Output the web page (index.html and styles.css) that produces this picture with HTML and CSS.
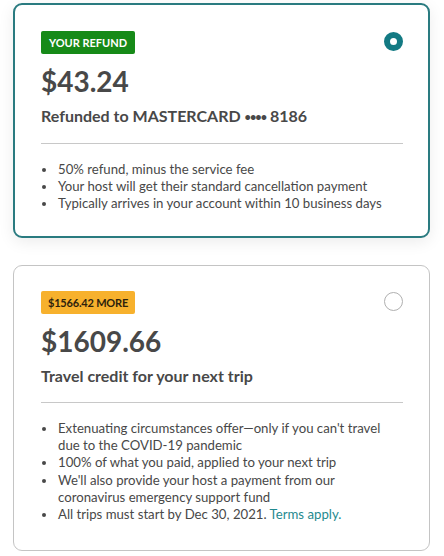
FILE: index.html
```html
<!DOCTYPE html>
<html lang="en">
<head>
    <meta charset="UTF-8">
    <meta name="viewport" content="width=device-width, initial-scale=1.0">
    <title>Refund options</title>
    <link rel="stylesheet" href="styles.css">
</head>
<body>

<div class="options">
    <div class="option selected">
        <div class="option-head">
            <span class="badge badge-green">YOUR REFUND</span>
            <span class="radio"></span>
        </div>
        <div class="amount">$43.24</div>
        <div class="subtitle">Refunded to MASTERCARD <span class="dots">&bull;&bull;&bull;&bull;</span> 8186</div>
        <hr class="divider">
        <ul class="points">
            <li>50% refund, minus the service fee</li>
            <li>Your host will get their standard cancellation payment</li>
            <li>Typically arrives in your account within 10 business days</li>
        </ul>
    </div>

    <div class="option">
        <div class="option-head">
            <span class="badge badge-orange">$1566.42 MORE</span>
            <span class="radio"></span>
        </div>
        <div class="amount">$1609.66</div>
        <div class="subtitle">Travel credit for your next trip</div>
        <hr class="divider">
        <ul class="points">
            <li>Extenuating circumstances offer&mdash;only if you can't travel due to the COVID-19 pandemic</li>
            <li>100% of what you paid, applied to your next trip</li>
            <li>We'll also provide your host a payment from our coronavirus emergency support fund</li>
            <li>All trips must start by Dec 30, 2021. <a href="#" class="link">Terms apply.</a></li>
        </ul>
    </div>
</div>

</body>
</html>
```

FILE: styles.css
```css
body {
    margin: 0;
    background: #fff;
    font-family: Lato, "Noto Sans", Arial, sans-serif;
    color: #484848;
}

.options {
    padding: 3px 14px 0 13px;
    display: flex;
    flex-direction: column;
    gap: 27px;
}

.option {
    border: 1px solid #c4c4c4;
    border-radius: 9px;
    padding: 25px 26px 27px 27px;
    background: #fff;
}

.option.selected {
    border: 2px solid #2a7b80;
    padding: 26px 25px 25px 26px;
    box-shadow: 0 4px 16px rgba(0, 0, 0, 0.08);
    height: 235px;
    box-sizing: border-box;
}

.option-head {
    display: flex;
    justify-content: space-between;
    align-items: flex-start;
}

.badge {
    display: inline-block;
    height: 23px;
    line-height: 23px;
    padding: 0 8px;
    font-size: 11px;
    font-weight: 700;
    border-radius: 2px;
}

.badge-green {
    background: #168a18;
    color: #fff;
}

.badge-orange {
    background: #f7b12d;
    color: #2e220c;
    padding: 0 7px;
    letter-spacing: -0.2px;
}

.radio {
    width: 19px;
    height: 19px;
    border: 1px solid #b0b0b0;
    border-radius: 50%;
    box-sizing: border-box;
    margin-top: 1px;
}

.selected .radio {
    border: 6px solid #137a83;
}

.amount {
    font-size: 28px;
    font-weight: 700;
    line-height: 36px;
    margin-top: 9px;
}

.subtitle {
    font-size: 16px;
    font-weight: 700;
    line-height: 20px;
    margin-top: 7px;
}

.dots {
    font-size: 11px;
    letter-spacing: -1px;
    vertical-align: 1px;
}

.divider {
    border: 0;
    border-top: 1px solid #c8c8c8;
    margin: 16px 0 0;
}

.points {
    margin: 17px 0 0;
    padding-left: 16px;
    font-size: 13.2px;
    line-height: 17.2px;
}

.points li {
    padding-left: 1px;
}

.link {
    color: #1f8a8f;
    text-decoration: none;
}
```
